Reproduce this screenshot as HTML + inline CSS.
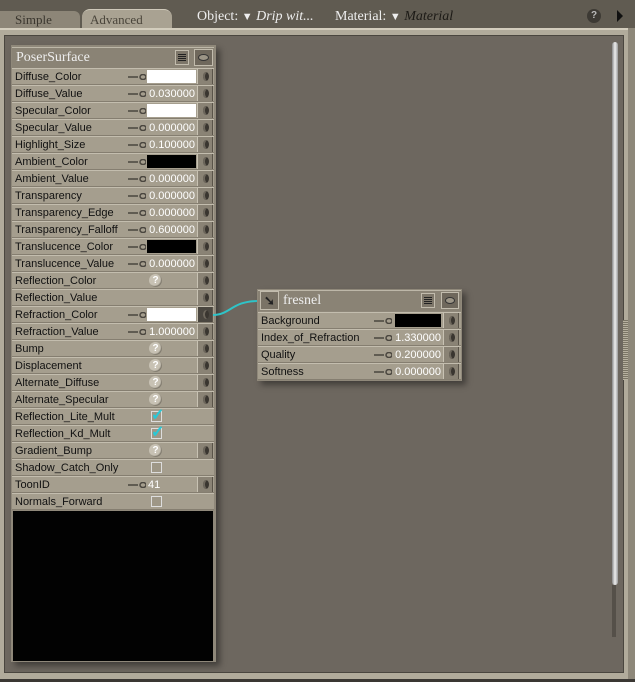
<!DOCTYPE html>
<html><head><meta charset="utf-8"><style>
*{margin:0;padding:0;box-sizing:border-box}
body{width:635px;height:682px;background:#3a3733;position:relative;overflow:hidden;font-family:"Liberation Sans",sans-serif}
.a{position:absolute}
.serif{font-family:"Liberation Serif",serif}
.row{position:absolute;left:12px;width:202px;height:17px;background:#a59e8e;border-top:1px solid #c3bdae;border-bottom:1px solid #857e70}
.lbl{position:absolute;left:3px;top:2px;font-size:11px;color:#111;white-space:nowrap}
.key{position:absolute;left:116px;top:5px;width:18px;height:6px}
.val{position:absolute;left:135px;top:1px;width:49px;height:13px;font-size:11px;color:#fff;text-align:right;padding-right:1px;line-height:14px}
.w{background:#fff}
.b{background:#000}
.plug{position:absolute;left:185px;top:0;width:16px;height:15px;background:#8a8375;border-left:1px solid #c8c2b3;border-right:1px solid #5a5449}
.plug:after{content:"";position:absolute;left:5px;top:3px;width:6px;height:9px;border-radius:50%;background:#3a3630;box-shadow:inset 2px 0 0 #6d675c}
.q{position:absolute;left:137px;top:1px;width:13px;height:13px;border-radius:50%;background:#c8c2b4;color:#fff;font-size:10px;font-weight:bold;text-align:center;line-height:13px;box-shadow:inset -1px -1px 1px #7d776a}
.cb{position:absolute;left:139px;top:2px;width:11px;height:11px;border:1px solid #ddd;background:#9e9787}
.ck{position:absolute;left:139px;top:-4px;color:#27c9d8;font-size:16px;font-weight:bold}
</style></head><body>
<div class="a" style="left:0;top:0;width:635px;height:30px;background:#605b51"></div>
<div class="a" style="left:0;top:11px;width:80px;height:19px;background:#8d8678;border-radius:0 6px 0 0"></div>
<div class="a serif" style="left:15px;top:12px;font-size:13px;color:#3b372f">Simple</div>
<div class="a" style="left:82px;top:9px;width:90px;height:21px;background:#a9a292;border-radius:8px 8px 0 0;border-top:1px solid #cfc9ba"></div>
<div class="a serif" style="left:90px;top:12px;font-size:13px;color:#4a453b">Advanced</div>
<div class="a serif" style="left:197px;top:9px;font-size:14px;color:#eee">Object: <span style="font-size:11px">▼</span> <i>Drip wit...</i></div>
<div class="a serif" style="left:335px;top:9px;font-size:14px;color:#eee">Material: <span style="font-size:11px">▼</span> <i style="color:#1c1a16">Material</i></div>
<div class="a" style="left:587px;top:9px;width:14px;height:14px;border-radius:50%;background:#3d3a34;color:#bbb;font-size:10px;text-align:center;line-height:14px;font-weight:bold">?</div>
<div class="a" style="left:617px;top:10px;width:0;height:0;border-left:6px solid #111;border-top:6px solid transparent;border-bottom:6px solid transparent"></div>
<div class="a" style="left:0;top:28px;width:628px;height:651px;background:#b1ab9b;border-top:2px solid #d3cdbd"></div>
<div class="a" style="left:4px;top:35px;width:620px;height:638px;background:#6d675f;border:1px solid #4a463f"></div>
<div class="a" style="left:628px;top:28px;width:7px;height:651px;background:#8e887a"></div>
<div class="a" style="left:623px;top:320px;width:5px;height:60px;background:repeating-linear-gradient(#7a7465 0 1px,#b7b1a0 1px 2px)"></div>
<div class="a" style="left:612px;top:42px;width:6px;height:543px;background:linear-gradient(90deg,#888,#eee,#999);border-radius:3px"></div>
<div class="a" style="left:612px;top:585px;width:4px;height:52px;background:#555049"></div>
<div class="a" style="left:11px;top:45px;width:205px;height:617px;background:#8f887a;box-shadow:4px 4px 6px rgba(0,0,0,.4)"></div>
<div class="a" style="left:12px;top:47px;width:202px;height:21px;background:#8a8375;border-top:1px solid #bdb7a8"></div>
<div class="a serif" style="left:16px;top:50px;font-size:14px;color:#eee">PoserSurface</div>
<div class="a" style="left:175px;top:50px;width:14px;height:15px;background:#7d7669;border:1px solid #c2bcad"><div style="margin:3px 2px;height:8px;background:repeating-linear-gradient(#222 0 1px,transparent 1px 2px)"></div></div>
<div class="a" style="left:194px;top:49px;width:19px;height:17px;background:#6f685c;border:1px solid #c2bcad"><div style="margin:4px 3px;width:11px;height:7px;border-radius:50%;background:#9c9586;border:1px solid #333"></div></div>
<div class="a" style="left:13px;top:511px;width:200px;height:150px;background:#020202"></div>

<div class="row" style="top:68px"><span class="lbl">Diffuse_Color</span><svg class="key"><path d="M0 3h10M12 3a3 2.5 0 1 0 6 0a3 2.5 0 1 0-6 0" stroke="#4a463f" fill="none" stroke-width="1.5"/></svg><div class="val w"></div><div class="plug"></div></div>
<div class="row" style="top:85px"><span class="lbl">Diffuse_Value</span><svg class="key"><path d="M0 3h10M12 3a3 2.5 0 1 0 6 0a3 2.5 0 1 0-6 0" stroke="#4a463f" fill="none" stroke-width="1.5"/></svg><div class="val">0.030000</div><div class="plug"></div></div>
<div class="row" style="top:102px"><span class="lbl">Specular_Color</span><svg class="key"><path d="M0 3h10M12 3a3 2.5 0 1 0 6 0a3 2.5 0 1 0-6 0" stroke="#4a463f" fill="none" stroke-width="1.5"/></svg><div class="val w"></div><div class="plug"></div></div>
<div class="row" style="top:119px"><span class="lbl">Specular_Value</span><svg class="key"><path d="M0 3h10M12 3a3 2.5 0 1 0 6 0a3 2.5 0 1 0-6 0" stroke="#4a463f" fill="none" stroke-width="1.5"/></svg><div class="val">0.000000</div><div class="plug"></div></div>
<div class="row" style="top:136px"><span class="lbl">Highlight_Size</span><svg class="key"><path d="M0 3h10M12 3a3 2.5 0 1 0 6 0a3 2.5 0 1 0-6 0" stroke="#4a463f" fill="none" stroke-width="1.5"/></svg><div class="val">0.100000</div><div class="plug"></div></div>
<div class="row" style="top:153px"><span class="lbl">Ambient_Color</span><svg class="key"><path d="M0 3h10M12 3a3 2.5 0 1 0 6 0a3 2.5 0 1 0-6 0" stroke="#4a463f" fill="none" stroke-width="1.5"/></svg><div class="val b"></div><div class="plug"></div></div>
<div class="row" style="top:170px"><span class="lbl">Ambient_Value</span><svg class="key"><path d="M0 3h10M12 3a3 2.5 0 1 0 6 0a3 2.5 0 1 0-6 0" stroke="#4a463f" fill="none" stroke-width="1.5"/></svg><div class="val">0.000000</div><div class="plug"></div></div>
<div class="row" style="top:187px"><span class="lbl">Transparency</span><svg class="key"><path d="M0 3h10M12 3a3 2.5 0 1 0 6 0a3 2.5 0 1 0-6 0" stroke="#4a463f" fill="none" stroke-width="1.5"/></svg><div class="val">0.000000</div><div class="plug"></div></div>
<div class="row" style="top:204px"><span class="lbl">Transparency_Edge</span><svg class="key"><path d="M0 3h10M12 3a3 2.5 0 1 0 6 0a3 2.5 0 1 0-6 0" stroke="#4a463f" fill="none" stroke-width="1.5"/></svg><div class="val">0.000000</div><div class="plug"></div></div>
<div class="row" style="top:221px"><span class="lbl">Transparency_Falloff</span><svg class="key"><path d="M0 3h10M12 3a3 2.5 0 1 0 6 0a3 2.5 0 1 0-6 0" stroke="#4a463f" fill="none" stroke-width="1.5"/></svg><div class="val">0.600000</div><div class="plug"></div></div>
<div class="row" style="top:238px"><span class="lbl">Translucence_Color</span><svg class="key"><path d="M0 3h10M12 3a3 2.5 0 1 0 6 0a3 2.5 0 1 0-6 0" stroke="#4a463f" fill="none" stroke-width="1.5"/></svg><div class="val b"></div><div class="plug"></div></div>
<div class="row" style="top:255px"><span class="lbl">Translucence_Value</span><svg class="key"><path d="M0 3h10M12 3a3 2.5 0 1 0 6 0a3 2.5 0 1 0-6 0" stroke="#4a463f" fill="none" stroke-width="1.5"/></svg><div class="val">0.000000</div><div class="plug"></div></div>
<div class="row" style="top:272px"><span class="lbl">Reflection_Color</span><div class="q">?</div><div class="plug"></div></div>
<div class="row" style="top:289px"><span class="lbl">Reflection_Value</span><div class="plug"></div></div>
<div class="row" style="top:306px"><span class="lbl">Refraction_Color</span><svg class="key"><path d="M0 3h10M12 3a3 2.5 0 1 0 6 0a3 2.5 0 1 0-6 0" stroke="#4a463f" fill="none" stroke-width="1.5"/></svg><div class="val w"></div><div class="plug" style="background:#4a463f"></div></div>
<div class="row" style="top:323px"><span class="lbl">Refraction_Value</span><svg class="key"><path d="M0 3h10M12 3a3 2.5 0 1 0 6 0a3 2.5 0 1 0-6 0" stroke="#4a463f" fill="none" stroke-width="1.5"/></svg><div class="val">1.000000</div><div class="plug"></div></div>
<div class="row" style="top:340px"><span class="lbl">Bump</span><div class="q">?</div><div class="plug"></div></div>
<div class="row" style="top:357px"><span class="lbl">Displacement</span><div class="q">?</div><div class="plug"></div></div>
<div class="row" style="top:374px"><span class="lbl">Alternate_Diffuse</span><div class="q">?</div><div class="plug"></div></div>
<div class="row" style="top:391px"><span class="lbl">Alternate_Specular</span><div class="q">?</div><div class="plug"></div></div>
<div class="row" style="top:408px"><span class="lbl">Reflection_Lite_Mult</span><div class="cb"></div><span class="ck">✓</span></div>
<div class="row" style="top:425px"><span class="lbl">Reflection_Kd_Mult</span><div class="cb"></div><span class="ck">✓</span></div>
<div class="row" style="top:442px"><span class="lbl">Gradient_Bump</span><div class="q">?</div><div class="plug"></div></div>
<div class="row" style="top:459px"><span class="lbl">Shadow_Catch_Only</span><div class="cb"></div></div>
<div class="row" style="top:476px"><span class="lbl">ToonID</span><svg class="key"><path d="M0 3h10M12 3a3 2.5 0 1 0 6 0a3 2.5 0 1 0-6 0" stroke="#4a463f" fill="none" stroke-width="1.5"/></svg><div class="val" style="text-align:left;left:136px">41</div><div class="plug"></div></div>
<div class="row" style="top:493px"><span class="lbl">Normals_Forward</span><div class="cb"></div></div>

<svg class="a" style="left:210px;top:295px" width="55" height="30"><path d="M3 20 C20 20 22 6 48 6" stroke="#2fc4c8" stroke-width="2" fill="none"/></svg>

<div class="a" style="left:257px;top:289px;width:205px;height:92px;background:#8f887a;box-shadow:4px 4px 6px rgba(0,0,0,.4)"></div>
<div class="a" style="left:258px;top:290px;width:203px;height:21px;background:#8a8375;border-top:1px solid #bdb7a8"></div>
<div class="a" style="left:260px;top:291px;width:19px;height:19px;background:#7a7366;border:1px solid #c2bcad;color:#222;font-size:13px;text-align:center;line-height:17px;font-weight:bold">➘</div>
<div class="a serif" style="left:283px;top:293px;font-size:14px;color:#eee">fresnel</div>
<div class="a" style="left:421px;top:293px;width:14px;height:15px;background:#7d7669;border:1px solid #c2bcad"><div style="margin:3px 2px;height:8px;background:repeating-linear-gradient(#222 0 1px,transparent 1px 2px)"></div></div>
<div class="a" style="left:441px;top:292px;width:18px;height:17px;background:#6f685c;border:1px solid #c2bcad"><div style="margin:4px 3px;width:10px;height:7px;border-radius:50%;background:#9c9586;border:1px solid #333"></div></div>
<div class="row" style="left:258px;width:203px;top:312px"><span class="lbl">Background</span><svg class="key"><path d="M0 3h10M12 3a3 2.5 0 1 0 6 0a3 2.5 0 1 0-6 0" stroke="#4a463f" fill="none" stroke-width="1.5"/></svg><div class="val b" style="left:137px;width:46px"></div><div class="plug"></div></div>
<div class="row" style="left:258px;width:203px;top:329px"><span class="lbl">Index_of_Refraction</span><svg class="key"><path d="M0 3h10M12 3a3 2.5 0 1 0 6 0a3 2.5 0 1 0-6 0" stroke="#4a463f" fill="none" stroke-width="1.5"/></svg><div class="val">1.330000</div><div class="plug"></div></div>
<div class="row" style="left:258px;width:203px;top:346px"><span class="lbl">Quality</span><svg class="key"><path d="M0 3h10M12 3a3 2.5 0 1 0 6 0a3 2.5 0 1 0-6 0" stroke="#4a463f" fill="none" stroke-width="1.5"/></svg><div class="val">0.200000</div><div class="plug"></div></div>
<div class="row" style="left:258px;width:203px;top:363px"><span class="lbl">Softness</span><svg class="key"><path d="M0 3h10M12 3a3 2.5 0 1 0 6 0a3 2.5 0 1 0-6 0" stroke="#4a463f" fill="none" stroke-width="1.5"/></svg><div class="val">0.000000</div><div class="plug"></div></div>
</body></html>
